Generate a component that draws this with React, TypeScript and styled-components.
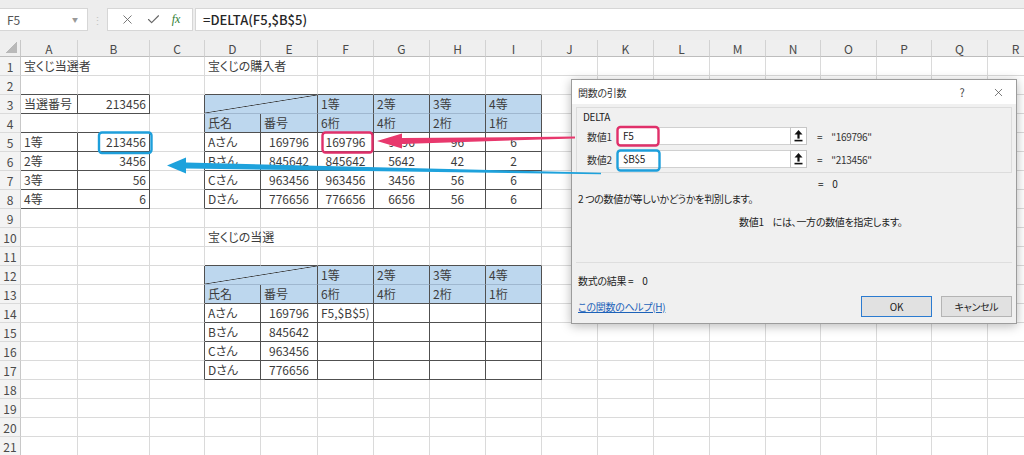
import React from 'react'
import styled, { createGlobalStyle } from 'styled-components'
import { X, Check } from 'lucide-react'

const GlobalStyle = createGlobalStyle`
  body {
    margin: 0;
    background: #fff;
    font-family: "Noto Sans CJK JP", "Noto Sans", sans-serif;
    color: #333;
  }
`

const GRID = '#dadada'
const DARK = '#505050'
const HEADLINE = '#9fb7cf'
const HEAD_FILL = '#bdd7ee'

const COLS = ['A', 'B', 'C', 'D', 'E', 'F', 'G', 'H', 'I', 'J', 'K', 'L', 'M', 'N', 'O', 'P', 'Q', 'R']
const COL_W = [57, 72, 55, 56, 57, 56, 56, 56, 56, 56, 56, 56, 56, 55, 56, 55, 56, 56]
const ROWS = 21

type Align = 'left' | 'center' | 'right'
interface CellDef {
  v: string
  a?: Align
}

const L = (v: string): CellDef => ({ v })
const R = (v: string): CellDef => ({ v, a: 'right' })
const C = (v: string): CellDef => ({ v, a: 'center' })

const prizeHead = { 5: L('1等'), 6: L('2等'), 7: L('3等'), 8: L('4等') }
const digitHead = { 3: L('氏名'), 4: L('番号'), 5: L('6桁'), 6: L('4桁'), 7: L('2桁'), 8: L('1桁') }

const data: Record<number, Record<number, CellDef>> = {
  1: { 0: L('宝くじ当選者'), 3: L('宝くじの購入者') },
  3: { 0: L('当選番号'), 1: R('213456'), ...prizeHead },
  4: digitHead,
  5: { 0: L('1等'), 1: R('213456'), 3: L('Aさん'), 4: C('169796'), 5: C('169796'), 6: C('9796'), 7: C('96'), 8: C('6') },
  6: { 0: L('2等'), 1: R('3456'), 3: L('Bさん'), 4: C('845642'), 5: C('845642'), 6: C('5642'), 7: C('42'), 8: C('2') },
  7: { 0: L('3等'), 1: R('56'), 3: L('Cさん'), 4: C('963456'), 5: C('963456'), 6: C('3456'), 7: C('56'), 8: C('6') },
  8: { 0: L('4等'), 1: R('6'), 3: L('Dさん'), 4: C('776656'), 5: C('776656'), 6: C('6656'), 7: C('56'), 8: C('6') },
  10: { 3: L('宝くじの当選') },
  12: prizeHead,
  13: digitHead,
  14: { 3: L('Aさん'), 4: C('169796'), 5: L('F5,$B$5)') },
  15: { 3: L('Bさん'), 4: C('845642') },
  16: { 3: L('Cさん'), 4: C('963456') },
  17: { 3: L('Dさん'), 4: C('776656') },
}

// bordered ranges on the sheet (head = number of blue header rows)
const boxes = [
  { r1: 3, r2: 3, c1: 0, c2: 1, head: 0 },
  { r1: 5, r2: 8, c1: 0, c2: 1, head: 0 },
  { r1: 3, r2: 8, c1: 3, c2: 8, head: 2 },
  { r1: 12, r2: 17, c1: 3, c2: 8, head: 2 },
]

const inBox = (r: number, c: number) => boxes.some((b) => r >= b.r1 && r <= b.r2 && c >= b.c1 && c <= b.c2)
const isHead = (r: number, c: number) =>
  boxes.some((b) => b.head > 0 && r >= b.r1 && r < b.r1 + b.head && c >= b.c1 && c <= b.c2)
const isDiag = (r: number, c: number) => (r === 3 || r === 12) && c === 3

const rightColor = (r: number, c: number) => (inBox(r, c) || inBox(r, c + 1) ? DARK : GRID)
const bottomColor = (r: number, c: number) => {
  if (isHead(r, c) && isHead(r + 1, c)) return HEADLINE
  return inBox(r, c) || inBox(r + 1, c) ? DARK : GRID
}

const Page = styled.div`
  position: relative;
  width: 1024px;
  height: 455px;
  overflow: hidden;
  display: flex;
  flex-direction: column;
`

const FormulaBar = styled.div`
  height: 40px;
  flex: none;
  box-sizing: border-box;
  padding: 8px 0 9px;
  background: #ededed;
  display: flex;
  align-items: stretch;
`

const NameBox = styled.div`
  width: 88px;
  background: #fff;
  border: 1px solid #d6d6d6;
  border-left: none;
  box-sizing: border-box;
  display: flex;
  align-items: center;
  justify-content: space-between;
  padding: 0 9px 0 7px;
  font-size: 12px;
  color: #555;
`

const Caret = styled.span`
  font-size: 6px;
  color: #999;
`

const Dots = styled.div`
  width: 19px;
  display: flex;
  align-items: center;
  justify-content: center;
  color: #c4c4c4;
  font-size: 11px;
`

const IconBox = styled.div`
  width: 86px;
  background: #fff;
  border: 1px solid #d6d6d6;
  box-sizing: border-box;
  display: flex;
  align-items: center;
  justify-content: space-around;
  padding: 0 6px;
  color: #666;
`

const Fx = styled.span`
  font-family: "Liberation Serif", serif;
  font-style: italic;
  font-size: 12px;
  color: #2f7d32;
`

const FormulaInput = styled.div`
  flex: 1;
  margin-left: 2px;
  background: #fff;
  border: 1px solid #d6d6d6;
  border-right: none;
  display: flex;
  align-items: center;
  padding-left: 7px;
  font-size: 13px;
  font-weight: 500;
  color: #262626;
`

const Sheet = styled.div`
  display: grid;
  grid-template-columns: 21px ${COL_W.map((w) => `${w}px`).join(' ')};
  grid-template-rows: 17px repeat(${ROWS}, 19px);
  font-size: 12px;
`

const Corner = styled.div`
  background: linear-gradient(to bottom right, transparent 50%, #b9b9b9 50%) no-repeat right 3px bottom 3px / 11px 11px,
    #efefef;
  border-right: 1px solid #c8c8c8;
  border-bottom: 1px solid #bdbdbd;
`

const ColHead = styled.div`
  background: #efefef;
  border-right: 1px solid #d2d2d2;
  border-bottom: 1px solid #bdbdbd;
  box-sizing: border-box;
  display: flex;
  align-items: center;
  justify-content: center;
  color: #4a4a4a;
  font-size: 12px;
`

const RowHead = styled.div`
  background: #f3f3f3;
  border-right: 1px solid #c8c8c8;
  border-bottom: 1px solid ${GRID};
  box-sizing: border-box;
  display: flex;
  align-items: center;
  justify-content: center;
  color: #4a4a4a;
  font-size: 12px;
`

const Cell = styled.div<{ $right: string; $bottom: string; $fill?: string; $align: Align; $span?: number }>`
  grid-column: span ${(p) => p.$span ?? 1};
  box-sizing: border-box;
  border-right: 1px solid ${(p) => p.$right};
  border-bottom: 1px solid ${(p) => p.$bottom};
  background: ${(p) => p.$fill ?? 'transparent'};
  padding: 0 3px;
  line-height: 18px;
  text-align: ${(p) => p.$align};
  white-space: nowrap;
  color: #3c3c3c;
  font-feature-settings: "palt";
`

const DiagCell = styled(Cell)`
  background: linear-gradient(
      to bottom right,
      transparent calc(50% - 0.7px),
      #3a3a3a 50%,
      transparent calc(50% + 0.7px)
    ),
    ${HEAD_FILL};
`

const Dialog = styled.div`
  position: absolute;
  left: 571px;
  top: 79px;
  width: 446px;
  height: 245px;
  box-sizing: border-box;
  border: 1px solid #9c9c9c;
  background: #f0f0f0;
  box-shadow: 0 2px 10px rgba(0, 0, 0, 0.28);
  display: flex;
  flex-direction: column;
  font-size: 10px;
  font-feature-settings: "palt";
  letter-spacing: -0.3px;
  color: #222;
  z-index: 5;
`

const TitleBar = styled.div`
  height: 24px;
  background: #fff;
  display: flex;
  align-items: center;
  padding: 0 0 0 6px;
`

const Title = styled.div`
  flex: 1;
  color: #333;
`

const TitleButton = styled.div`
  width: 36px;
  display: flex;
  align-items: center;
  justify-content: center;
  color: #444;
  font-size: 11px;
`

const Body = styled.div`
  padding: 3px 4px 0 4px;
  display: flex;
  flex-direction: column;
`

const Group = styled.div`
  height: 66px;
  box-sizing: border-box;
  border: 1px solid #dcdcdc;
  padding: 2px 10px 0;
`

const FnName = styled.div`
  height: 14px;
  line-height: 14px;
  margin-left: -4px;
`

const ArgRow = styled.div<{ $first?: boolean }>`
  display: grid;
  grid-template-columns: 30px 173px 17px auto;
  align-items: center;
  height: 18px;
  margin-top: ${(p) => (p.$first ? '3px' : '5px')};
`

const ArgLabel = styled.div`
  color: #333;
`

const ArgInput = styled.div`
  height: 18px;
  box-sizing: border-box;
  background: #fff;
  border: 1px solid #d0d0d0;
  border-right: none;
  padding-left: 5px;
  line-height: 16px;
`

const RefButton = styled.div`
  height: 18px;
  box-sizing: border-box;
  background: #fff;
  border: 1px solid #c6c6c6;
  display: flex;
  align-items: center;
  justify-content: center;
`

const ArgValue = styled.div`
  padding-left: 10px;
  display: flex;
  gap: 9px;
  color: #333;
`

const Line = styled.div<{ $top: number; $indent?: number }>`
  height: 14px;
  line-height: 14px;
  margin-top: ${(p) => p.$top}px;
  padding-left: ${(p) => p.$indent ?? 2}px;
  display: flex;
  gap: 9px;
  white-space: nowrap;
`

const Separator = styled.div`
  margin-top: 33px;
  height: 1px;
  background: #dedede;
`

const Footer = styled.div`
  margin-top: 8px;
  display: flex;
  align-items: center;
  padding-left: 2px;
`

const HelpLink = styled.span`
  flex: 1;
  color: #1c62b9;
  text-decoration: underline;
`

const Button = styled.div<{ $default?: boolean }>`
  width: 71px;
  height: 21px;
  box-sizing: border-box;
  background: #e1e1e1;
  border: 1px solid ${(p) => (p.$default ? '#2b7bd0' : '#b4b4b4')};
  display: flex;
  align-items: center;
  justify-content: center;
  margin-left: 9px;
  color: #222;
`

const Marks = styled.svg`
  position: absolute;
  left: 0;
  top: 0;
  z-index: 10;
  pointer-events: none;
`

const RefIcon = () => (
  <svg width="9" height="12" viewBox="0 0 9 12">
    <polygon points="4.5,0 0.5,4.5 8.5,4.5" fill="#111" />
    <rect x="3.4" y="4" width="2.2" height="4.6" fill="#111" />
    <rect x="0.5" y="9.8" width="8" height="1.6" fill="#111" />
  </svg>
)

const App: React.FC = () => {
  const rows = []
  for (let r = 1; r <= ROWS; r++) {
    rows.push(<RowHead key={`h${r}`}>{r}</RowHead>)
    for (let c = 0; c < COLS.length; c++) {
      if (isDiag(r, c - 1)) continue
      const def = data[r]?.[c]
      if (isDiag(r, c)) {
        rows.push(<DiagCell key={`${r}-${c}`} $span={2} $right={DARK} $bottom={HEADLINE} $align="left" />)
        continue
      }
      rows.push(
        <Cell
          key={`${r}-${c}`}
          $right={rightColor(r, c)}
          $bottom={bottomColor(r, c)}
          $fill={isHead(r, c) ? HEAD_FILL : undefined}
          $align={def?.a ?? 'left'}
        >
          {def?.v}
        </Cell>
      )
    }
  }

  return (
    <Page>
      <GlobalStyle />
      <FormulaBar>
        <NameBox>
          F5<Caret>▼</Caret>
        </NameBox>
        <Dots>⋮</Dots>
        <IconBox>
          <X size={15} strokeWidth={1.4} />
          <Check size={15} strokeWidth={1.8} />
          <Fx>fx</Fx>
        </IconBox>
        <FormulaInput>=DELTA(F5,$B$5)</FormulaInput>
      </FormulaBar>

      <Sheet>
        <Corner />
        {COLS.map((l) => (
          <ColHead key={l}>{l}</ColHead>
        ))}
        {rows}
      </Sheet>

      <Dialog>
        <TitleBar>
          <Title>関数の引数</Title>
          <TitleButton>?</TitleButton>
          <TitleButton>
            <X size={13} strokeWidth={1.3} />
          </TitleButton>
        </TitleBar>
        <Body>
          <Group>
            <FnName>DELTA</FnName>
            <ArgRow $first>
              <ArgLabel>数値1</ArgLabel>
              <ArgInput>F5</ArgInput>
              <RefButton>
                <RefIcon />
              </RefButton>
              <ArgValue>
                <span>=</span>
                <span>"169796"</span>
              </ArgValue>
            </ArgRow>
            <ArgRow>
              <ArgLabel>数値2</ArgLabel>
              <ArgInput>$B$5</ArgInput>
              <RefButton>
                <RefIcon />
              </RefButton>
              <ArgValue>
                <span>=</span>
                <span>"213456"</span>
              </ArgValue>
            </ArgRow>
          </Group>
          <Line $top={4} $indent={242}>
            <span>=</span>
            <span>0</span>
          </Line>
          <Line $top={1}>2 つの数値が等しいかどうかを判別します。</Line>
          <Line $top={9} $indent={163}>
            <span>数値1</span>
            <span>には、一方の数値を指定します。</span>
          </Line>
          <Separator />
          <Line $top={11}>
            <span>数式の結果 =</span>
            <span>0</span>
          </Line>
          <Footer>
            <HelpLink>この関数のヘルプ(H)</HelpLink>
            <Button $default>OK</Button>
            <Button>キャンセル</Button>
          </Footer>
        </Body>
      </Dialog>

      <Marks width="1024" height="455" viewBox="0 0 1024 455">
        <polygon points="575,136.6 402,138 402,133.5 377,141 402,148.5 402,144 575,138.4" fill="#e8386d" />
        <polygon points="601,172.8 186,162.5 186,157.5 167,165.5 186,173.5 186,168.5 601,174.2" fill="#1ea2dc" />
        <rect x="322.5" y="132.5" width="50" height="20" rx="3" fill="none" stroke="#e0306a" strokeWidth="2.4" />
        <rect x="617.5" y="127" width="41" height="18.5" rx="3" fill="none" stroke="#e0306a" strokeWidth="2.4" />
        <rect x="99" y="132.5" width="52.5" height="20.5" rx="3" fill="none" stroke="#1e9fdb" strokeWidth="2.4" />
        <rect x="617.5" y="150.5" width="42" height="20" rx="3" fill="none" stroke="#1e9fdb" strokeWidth="2.4" />
      </Marks>
    </Page>
  )
}

export default App
